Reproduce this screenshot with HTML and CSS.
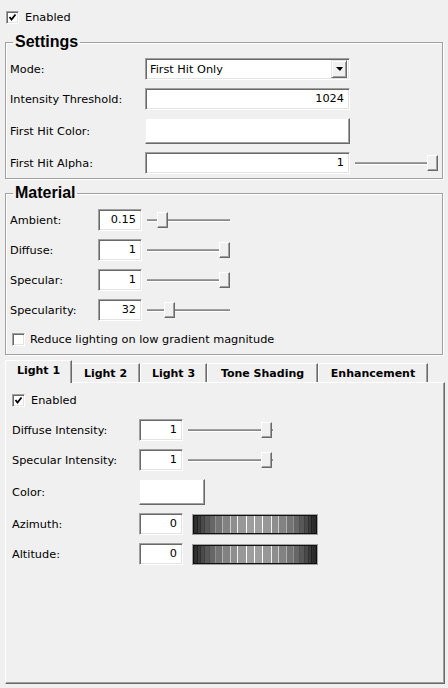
FILE: index.html
```html
<!DOCTYPE html>
<html>
<head>
<meta charset="utf-8">
<link rel="stylesheet" href="styles.css">
</head>
<body>
<div class="check-row top-check">
  <span class="check"><svg width="9" height="9" viewBox="0 0 9 9"><polyline points="1.5,4 3.5,6.5 7.5,1.5" fill="none" stroke="#000" stroke-width="1.8"/></svg></span>
  <span class="check-label">Enabled</span>
</div>

<fieldset class="group settings">
  <legend>Settings</legend>
  <div class="rows">
    <div class="row">
      <span class="label">Mode:</span>
      <div class="select"><span class="select-text">First Hit Only</span><span class="select-btn"><span class="arrow"></span></span></div>
    </div>
    <div class="row">
      <span class="label">Intensity Threshold:</span>
      <div class="field wide">1024</div>
    </div>
    <div class="row tall">
      <span class="label">First Hit Color:</span>
      <div class="colorbtn wide"></div>
    </div>
    <div class="row">
      <span class="label">First Hit Alpha:</span>
      <div class="field wide">1</div>
      <div class="slider s-settings"><div class="track"></div><div class="thumb" style="left:72px"></div></div>
    </div>
  </div>
</fieldset>

<fieldset class="group material">
  <legend>Material</legend>
  <div class="rows">
    <div class="row">
      <span class="label">Ambient:</span>
      <div class="field small">0.15</div>
      <div class="slider s-mat"><div class="track"></div><div class="thumb" style="left:10px"></div></div>
    </div>
    <div class="row">
      <span class="label">Diffuse:</span>
      <div class="field small">1</div>
      <div class="slider s-mat"><div class="track"></div><div class="thumb" style="left:72px"></div></div>
    </div>
    <div class="row">
      <span class="label">Specular:</span>
      <div class="field small">1</div>
      <div class="slider s-mat"><div class="track"></div><div class="thumb" style="left:72px"></div></div>
    </div>
    <div class="row">
      <span class="label">Specularity:</span>
      <div class="field small">32</div>
      <div class="slider s-mat"><div class="track"></div><div class="thumb" style="left:17px"></div></div>
    </div>
    <div class="check-row mat-check">
      <span class="check"></span>
      <span class="check-label">Reduce lighting on low gradient magnitude</span>
    </div>
  </div>
</fieldset>

<div class="tabs">
  <div class="tab active t1">Light 1</div>
  <div class="tab t2">Light 2</div>
  <div class="tab t3">Light 3</div>
  <div class="tab t4">Tone Shading</div>
  <div class="tab t5">Enhancement</div>
</div>
<div class="pane">
  <div class="check-row pane-check">
    <span class="check"><svg width="9" height="9" viewBox="0 0 9 9"><polyline points="1.5,4 3.5,6.5 7.5,1.5" fill="none" stroke="#000" stroke-width="1.8"/></svg></span>
    <span class="check-label">Enabled</span>
  </div>
  <div class="rows pane-rows">
    <div class="row">
      <span class="label">Diffuse Intensity:</span>
      <div class="field small">1</div>
      <div class="slider s-pane"><div class="track"></div><div class="thumb" style="left:73px"></div></div>
    </div>
    <div class="row">
      <span class="label">Specular Intensity:</span>
      <div class="field small">1</div>
      <div class="slider s-pane"><div class="track"></div><div class="thumb" style="left:73px"></div></div>
    </div>
    <div class="row tall">
      <span class="label">Color:</span>
      <div class="colorbtn cbtn"></div>
    </div>
    <div class="row">
      <span class="label">Azimuth:</span>
      <div class="field small">0</div>
      <svg class="wheel" width="126" height="21" viewBox="0 0 126 21">
        <defs>
          <symbol id="wh" viewBox="0 0 126 21">
            <rect x="0" y="0" width="126" height="21" fill="#a0a0a0"/>
            <rect x="1" y="1" width="124" height="19" fill="#101010"/>
            <g transform="translate(0,2)">
              <rect x="2" width="1" height="17" fill="#2a2a2a"/>
              <rect x="3" width="2" height="17" fill="#303030"/>
              <rect x="5" width="3" height="17" fill="#3c3c3c"/>
              <rect x="8" width="4" height="17" fill="#4a4a4a"/>
              <rect x="12" width="5" height="17" fill="#585858"/>
              <rect x="17" width="6" height="17" fill="#666666"/>
              <rect x="23" width="7" height="17" fill="#747474"/>
              <rect x="30" width="8" height="17" fill="#828282"/>
              <rect x="38" width="7" height="17" fill="#8e8e8e"/>
              <rect x="45" width="9" height="17" fill="#989898"/>
              <rect x="54" width="8" height="17" fill="#9e9e9e"/>
              <rect x="62" width="8" height="17" fill="#9e9e9e"/>
              <rect x="70" width="9" height="17" fill="#989898"/>
              <rect x="79" width="7" height="17" fill="#8e8e8e"/>
              <rect x="86" width="8" height="17" fill="#828282"/>
              <rect x="94" width="7" height="17" fill="#747474"/>
              <rect x="101" width="6" height="17" fill="#666666"/>
              <rect x="107" width="5" height="17" fill="#585858"/>
              <rect x="112" width="4" height="17" fill="#4a4a4a"/>
              <rect x="116" width="3" height="17" fill="#3c3c3c"/>
              <rect x="119" width="2" height="17" fill="#303030"/>
              <rect x="121" width="3" height="17" fill="#2a2a2a"/>
              <rect x="5" width="1" height="17" fill="#202020"/>
              <rect x="8" width="1" height="17" fill="#303030"/>
              <rect x="12" width="1" height="17" fill="#404040"/>
              <rect x="17" width="1" height="17" fill="#505050"/>
              <rect x="23" width="1" height="17" fill="#909090"/>
              <rect x="30" width="1" height="17" fill="#b0b0b0"/>
              <rect x="38" width="1" height="17" fill="#d0d0d0"/>
              <rect x="45" width="1" height="17" fill="#f0f0f0"/>
              <rect x="54" width="1" height="17" fill="#ffffff"/>
              <rect x="62" width="1" height="17" fill="#ffffff"/>
              <rect x="70" width="1" height="17" fill="#ffffff"/>
              <rect x="79" width="1" height="17" fill="#f0f0f0"/>
              <rect x="86" width="1" height="17" fill="#d0d0d0"/>
              <rect x="94" width="1" height="17" fill="#b0b0b0"/>
              <rect x="101" width="1" height="17" fill="#909090"/>
              <rect x="107" width="1" height="17" fill="#505050"/>
              <rect x="112" width="1" height="17" fill="#404040"/>
              <rect x="116" width="1" height="17" fill="#303030"/>
              <rect x="119" width="1" height="17" fill="#202020"/>
            </g>
          </symbol>
        </defs>
        <use href="#wh"/>
      </svg>
    </div>
    <div class="row">
      <span class="label">Altitude:</span>
      <div class="field small">0</div>
      <svg class="wheel" width="126" height="21" viewBox="0 0 126 21"><use href="#wh"/></svg>
    </div>
  </div>
</div>
</body>
</html>
```

FILE: styles.css
```css
* { box-sizing: border-box; }
html, body { margin: 0; padding: 0; }
body {
  width: 448px;
  height: 688px;
  background: #f0f0f0;
  font-family: "DejaVu Sans", Tahoma, sans-serif;
  font-size: 11.3px;
  color: #000;
  overflow: hidden;
}

/* checkboxes */
.check-row { display: flex; align-items: center; height: 20px; }
.check {
  width: 13px; height: 13px;
  background: #fff;
  border: 1px solid;
  border-color: #a0a0a0 #fff #fff #a0a0a0;
  box-shadow: inset 1px 1px 0 #696969, inset -1px -1px 0 #e3e3e3;
  display: flex; align-items: center; justify-content: center;
  flex: none;
}
.check svg { display: block; }
.top-check { margin: 7px 0 0 6px; }
.top-check .check-label { margin-left: 6px; }
.mat-check { margin-left: 2px; }
.mat-check .check-label { margin-left: 5px; }
.pane-check .check-label { margin-left: 6px; }

/* group boxes */
.group {
  margin: 0 5px;
  padding: 7px 4px 4px 4px;
  border: 1px solid #a0a0a0;
  box-shadow: 1px 1px 0 #fff, inset 1px 1px 0 #fff;
  min-width: 0;
}
.group legend {
  margin-left: 3px;
  padding: 0 2px;
  font: bold 16px/18px "Liberation Sans", Arial, sans-serif;
}
.settings { margin-top: 6px; }
.material { margin-top: 5px; padding-bottom: 5px; }

.rows { display: flex; flex-direction: column; gap: 8px; }
.row { display: flex; align-items: center; height: 22px; }
.row.tall { height: 26px; }

.label { flex: none; white-space: nowrap; }
.settings .label { width: 135px; }
.material .label { width: 88px; }
.pane .label { width: 127px; }

/* inputs */
.field {
  height: 22px;
  background: #fff;
  border: 1px solid;
  border-color: #a0a0a0 #fff #fff #a0a0a0;
  box-shadow: inset 1px 1px 0 #696969, inset -1px -1px 0 #e3e3e3;
  text-align: right;
  padding: 0 5px;
  line-height: 20px;
  flex: none;
}
.wide { width: 205px; }
.small { width: 44px; }

.select {
  width: 205px; height: 22px;
  background: #fff;
  border: 1px solid;
  border-color: #a0a0a0 #fff #fff #a0a0a0;
  box-shadow: inset 1px 1px 0 #696969, inset -1px -1px 0 #e3e3e3;
  display: flex; align-items: center; justify-content: space-between;
  padding: 2px 2px 2px 4px;
}
.select-btn {
  width: 16px; height: 18px;
  background: #f0f0f0;
  border: 1px solid;
  border-color: #e3e3e3 #696969 #696969 #e3e3e3;
  box-shadow: inset 1px 1px 0 #fff, inset -1px -1px 0 #a0a0a0;
  display: flex; align-items: center; justify-content: center;
}
.arrow {
  width: 0; height: 0;
  border-left: 4px solid transparent;
  border-right: 3px solid transparent;
  border-top: 4px solid #000;
}

.colorbtn {
  height: 26px;
  background: #fff;
  border: 1px solid;
  border-color: #f0f0f0 #696969 #696969 #f0f0f0;
  box-shadow: inset -1px -1px 0 #a0a0a0, inset 1px 1px 0 #fff;
  flex: none;
}
.cbtn { width: 66px; }

/* sliders */
.slider {
  position: relative;
  height: 22px;
  display: flex; align-items: center;
  flex: none;
  margin-left: 5px;
}
.s-settings { width: 83px; }
.s-mat { width: 83px; }
.s-pane { width: 85px; }
.track {
  width: 100%;
  height: 3px;
  background: #8a8a8a;
  border-top: 1px solid #a0a0a0;
  border-bottom: 1px solid #fff;
}
.thumb {
  position: absolute;
  top: 3px;
  width: 11px; height: 16px;
  background: #f0f0f0;
  border: 1px solid;
  border-color: #fff #696969 #696969 #fff;
  box-shadow: inset -1px -1px 0 #a0a0a0;
}

/* tabs */
.tabs {
  display: flex;
  align-items: flex-end;
  margin: 5px 0 0 5px;
  height: 22px;
  position: relative;
  z-index: 1;
}
.tab {
  height: 19px;
  display: flex; align-items: center; justify-content: center;
  font-weight: bold;
  font-size: 11px;
  border-top: 1px solid #fff;
  border-left: 1px solid #fff;
  border-right: 1px solid #696969;
  box-shadow: inset -1px 0 0 #a0a0a0;
  white-space: nowrap;
}
.tab.active {
  height: 23px;
  margin-bottom: -1px;
  background: #f0f0f0;
  padding-bottom: 3px;
}
.t1 { width: 67px; }
.t2 { width: 68px; border-left: none; }
.t3 { width: 67px; }
.t4 { width: 111px; }
.t5 { width: 110px; }

.pane {
  margin-left: 5px;
  width: 440px;
  height: 302px;
  border: 1px solid;
  border-color: #fff #696969 #696969 #fff;
  box-shadow: inset -1px -1px 0 #a0a0a0;
  padding: 7px 6px;
}
.pane-check { margin-bottom: 9px; }
.wheel { display: block; margin-left: 9px; flex: none; }
```
